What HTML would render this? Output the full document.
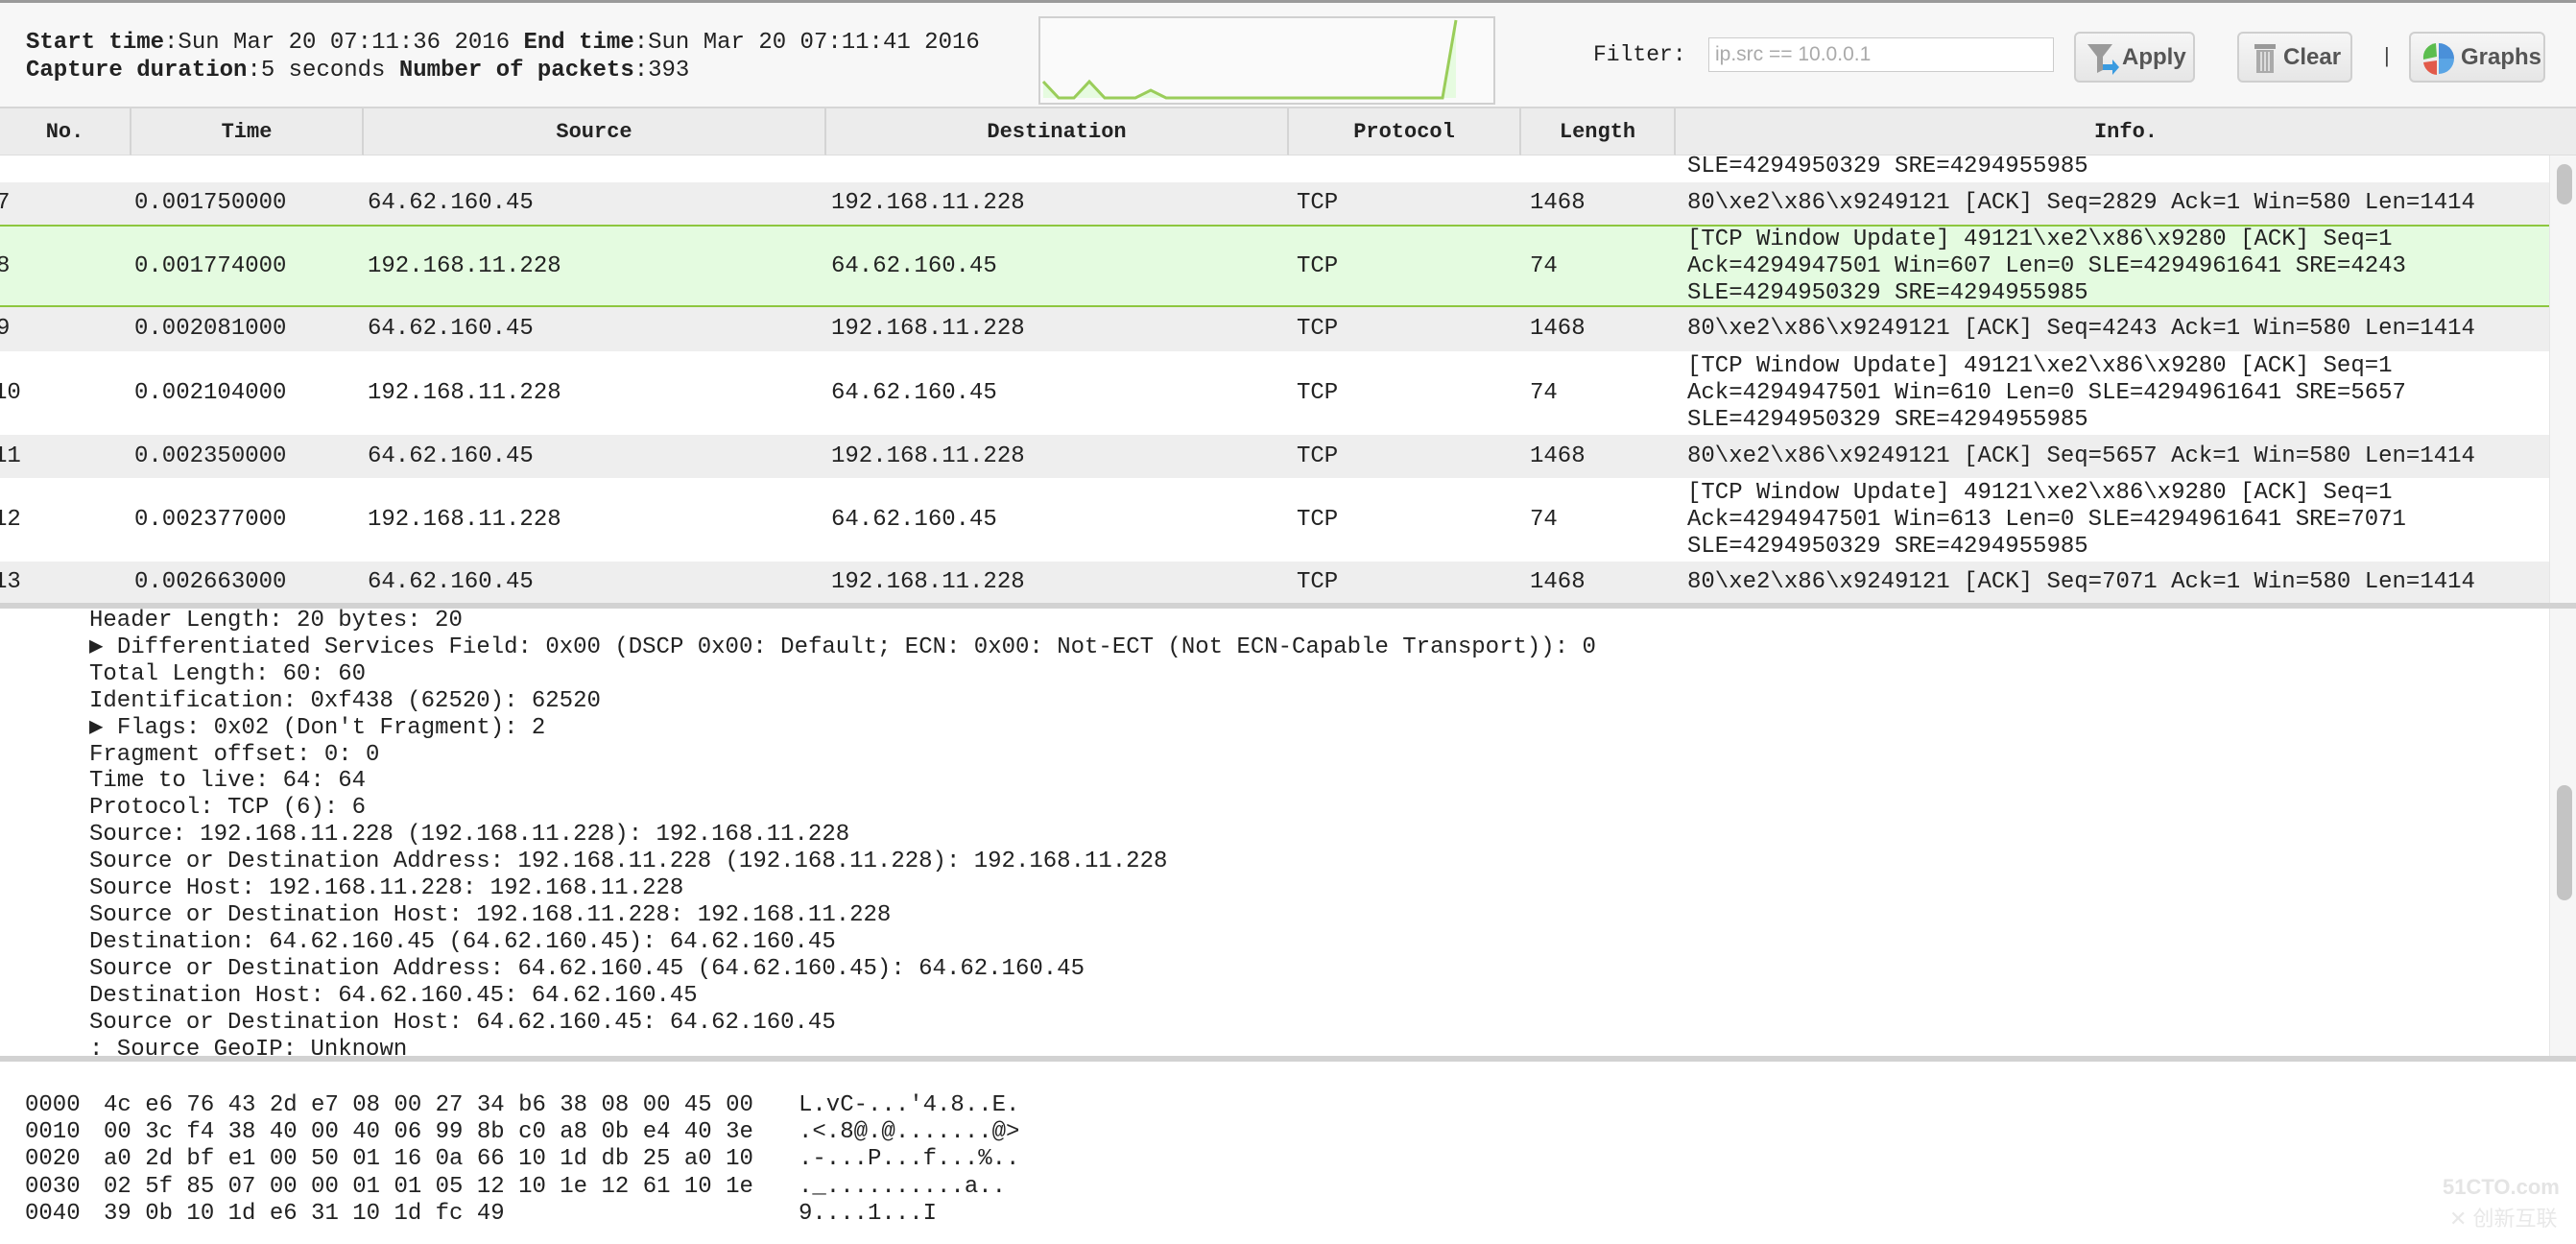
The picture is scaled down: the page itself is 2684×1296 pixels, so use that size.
<!DOCTYPE html>
<html><head><meta charset="utf-8"><style>
*{margin:0;padding:0;box-sizing:border-box}
body{width:2684px;height:1296px;overflow:hidden;background:#fff;font-family:"Liberation Mono",monospace;color:#222;position:relative}
.a{position:absolute;white-space:pre}
#top{position:absolute;left:0;top:0;width:2684px;height:113px;background:#f7f7f7;border-top:3px solid #9a9a9a;border-bottom:2px solid #d6d6d6}
.hd{position:absolute;top:113px;height:49px;background:#ececec;border-right:2px solid #d4d4d4;border-bottom:1px solid #ddd;font-weight:bold;font-size:22px;line-height:49px;text-align:center}
.row{position:absolute;left:0;width:2656px;font-size:24px}
.g{background:#eeeeee}
.sel{background:#e4fbe0;border-top:2px solid #8dc63f;border-bottom:2px solid #8dc63f}
.c{position:absolute;white-space:pre}
.btn{position:absolute;top:33px;height:53px;border:2px solid #cfcfcf;border-radius:6px;background:linear-gradient(#f6f6f6,#e6e6e6);font-family:"Liberation Sans",sans-serif;font-weight:bold;font-size:24px;color:#555;line-height:49px}
.det{font-size:24px}
</style></head><body>
<div id="top"></div>
<div class="a" style="left:27px;top:30px;font-size:24px;line-height:29px"><b>Start time</b>:Sun Mar 20 07:11:36 2016 <b>End time</b>:Sun Mar 20 07:11:41 2016
<b>Capture duration</b>:5 seconds <b>Number of packets</b>:393</div>
<svg class="a" style="left:1082px;top:17px" width="476" height="92">
<rect x="1" y="1" width="474" height="90" fill="#fafafa" stroke="#d0d0d0" stroke-width="2"/>
<polygon points="5,68 21,85 37,85 53,68 69,85 101,85 117,77 133,85 421,85 435,4 435,85 5,85" fill="#e6fbe0"/>
<polyline points="5,68 21,85 37,85 53,68 69,85 101,85 117,77 133,85 421,85 435,4" fill="none" stroke="#9acd5a" stroke-width="3"/>
</svg>
<div class="a" style="left:1660px;top:44px;font-size:23px">Filter:</div>
<div class="a" style="left:1780px;top:39px;width:360px;height:36px;background:#fff;border:1px solid #ccc;font-family:'Liberation Sans',sans-serif;font-size:21px;color:#aaa;line-height:34px;padding-left:6px">ip.src == 10.0.0.1</div>
<div class="btn" style="left:2161px;width:126px">
<svg class="a" style="left:10px;top:8px" width="36" height="36"><path d="M2 3h26l-10 13v14l-6 3V16z" fill="#9a9a9a"/><path d="M18 24h10v-5l7 8-7 8v-5H18z" fill="#3a9be0"/></svg><span class="a" style="left:48px">Apply</span></div>
<div class="btn" style="left:2331px;width:120px">
<svg class="a" style="left:14px;top:9px" width="26" height="34"><rect x="2" y="2" width="22" height="5" fill="#999"/><rect x="4" y="8" width="18" height="24" fill="#aaa"/><path d="M9 10v20M13 10v20M17 10v20" stroke="#ddd" stroke-width="2"/></svg><span class="a" style="left:46px">Clear</span></div>
<div class="a" style="left:2484px;top:45px;font-family:'Liberation Sans',sans-serif;font-size:22px;color:#444">|</div>
<div class="btn" style="left:2510px;width:142px">
<svg class="a" style="left:10px;top:7px" width="38" height="38"><path d="M19 19L19 3A16 16 0 0 1 35 19z" fill="#4a90d9"/><path d="M19 19L35 19A16 16 0 0 1 19 35z" fill="#5aa5e5"/><path d="M17 21L17 36A15 15 0 0 1 3 23z" fill="#e25a4a"/><path d="M17 17L3 20A15 15 0 0 1 16 3z" fill="#5bbd4e"/></svg><span class="a" style="left:52px">Graphs</span></div>

<div class="hd" style="left:0;width:137px">No.</div>
<div class="hd" style="left:137px;width:242px">Time</div>
<div class="hd" style="left:379px;width:482px">Source</div>
<div class="hd" style="left:861px;width:482px">Destination</div>
<div class="hd" style="left:1343px;width:242px">Protocol</div>
<div class="hd" style="left:1585px;width:161px">Length</div>
<div class="hd" style="left:1746px;width:938px;border-right:0">Info.</div>

<div class="row" style="top:162px;height:28px"><span class="c" style="left:1758px;top:-2px;line-height:28px">SLE=4294950329 SRE=4294955985</span></div>

<div class="row g" style="top:190px;height:44px;line-height:44px"><span class="c" style="left:-4px">7</span><span class="c" style="left:140px">0.001750000</span><span class="c" style="left:383px">64.62.160.45</span><span class="c" style="left:866px">192.168.11.228</span><span class="c" style="left:1351px">TCP</span><span class="c" style="left:1594px">1468</span><span class="c" style="left:1758px">80\xe2\x86\x9249121 [ACK] Seq=2829 Ack=1 Win=580 Len=1414</span></div>

<div class="row sel" style="top:234px;height:86px;line-height:84px"><span class="c" style="left:-4px">8</span><span class="c" style="left:140px">0.001774000</span><span class="c" style="left:383px">192.168.11.228</span><span class="c" style="left:866px">64.62.160.45</span><span class="c" style="left:1351px">TCP</span><span class="c" style="left:1594px">74</span><span class="c" style="left:1758px;top:0;line-height:28px">[TCP Window Update] 49121\xe2\x86\x9280 [ACK] Seq=1
Ack=4294947501 Win=607 Len=0 SLE=4294961641 SRE=4243
SLE=4294950329 SRE=4294955985</span></div>

<div class="row g" style="top:320px;height:46px;line-height:46px"><span class="c" style="left:-4px">9</span><span class="c" style="left:140px">0.002081000</span><span class="c" style="left:383px">64.62.160.45</span><span class="c" style="left:866px">192.168.11.228</span><span class="c" style="left:1351px">TCP</span><span class="c" style="left:1594px">1468</span><span class="c" style="left:1758px">80\xe2\x86\x9249121 [ACK] Seq=4243 Ack=1 Win=580 Len=1414</span></div>

<div class="row" style="top:366px;height:87px;line-height:87px"><span class="c" style="left:-7px">10</span><span class="c" style="left:140px">0.002104000</span><span class="c" style="left:383px">192.168.11.228</span><span class="c" style="left:866px">64.62.160.45</span><span class="c" style="left:1351px">TCP</span><span class="c" style="left:1594px">74</span><span class="c" style="left:1758px;top:2px;line-height:28px">[TCP Window Update] 49121\xe2\x86\x9280 [ACK] Seq=1
Ack=4294947501 Win=610 Len=0 SLE=4294961641 SRE=5657
SLE=4294950329 SRE=4294955985</span></div>

<div class="row g" style="top:453px;height:45px;line-height:45px"><span class="c" style="left:-7px">11</span><span class="c" style="left:140px">0.002350000</span><span class="c" style="left:383px">64.62.160.45</span><span class="c" style="left:866px">192.168.11.228</span><span class="c" style="left:1351px">TCP</span><span class="c" style="left:1594px">1468</span><span class="c" style="left:1758px">80\xe2\x86\x9249121 [ACK] Seq=5657 Ack=1 Win=580 Len=1414</span></div>

<div class="row" style="top:498px;height:87px;line-height:87px"><span class="c" style="left:-7px">12</span><span class="c" style="left:140px">0.002377000</span><span class="c" style="left:383px">192.168.11.228</span><span class="c" style="left:866px">64.62.160.45</span><span class="c" style="left:1351px">TCP</span><span class="c" style="left:1594px">74</span><span class="c" style="left:1758px;top:2px;line-height:28px">[TCP Window Update] 49121\xe2\x86\x9280 [ACK] Seq=1
Ack=4294947501 Win=613 Len=0 SLE=4294961641 SRE=7071
SLE=4294950329 SRE=4294955985</span></div>

<div class="row g" style="top:585px;height:44px;line-height:44px"><span class="c" style="left:-7px">13</span><span class="c" style="left:140px">0.002663000</span><span class="c" style="left:383px">64.62.160.45</span><span class="c" style="left:866px">192.168.11.228</span><span class="c" style="left:1351px">TCP</span><span class="c" style="left:1594px">1468</span><span class="c" style="left:1758px">80\xe2\x86\x9249121 [ACK] Seq=7071 Ack=1 Win=580 Len=1414</span></div>

<div class="a" style="left:2656px;top:162px;width:28px;height:467px;background:#f6f6f6;border-left:1px solid #e6e6e6"></div>
<div class="a" style="left:2664px;top:171px;width:16px;height:42px;background:#c4c4c4;border-radius:8px"></div>

<div class="a" style="left:0;top:628px;width:2684px;height:6px;background:#d2d2d2"></div>
<div class="a det" style="left:93px;top:633px;line-height:27.9px">Header Length: 20 bytes: 20
▶ Differentiated Services Field: 0x00 (DSCP 0x00: Default; ECN: 0x00: Not-ECT (Not ECN-Capable Transport)): 0
Total Length: 60: 60
Identification: 0xf438 (62520): 62520
▶ Flags: 0x02 (Don't Fragment): 2
Fragment offset: 0: 0
Time to live: 64: 64
Protocol: TCP (6): 6
Source: 192.168.11.228 (192.168.11.228): 192.168.11.228
Source or Destination Address: 192.168.11.228 (192.168.11.228): 192.168.11.228
Source Host: 192.168.11.228: 192.168.11.228
Source or Destination Host: 192.168.11.228: 192.168.11.228
Destination: 64.62.160.45 (64.62.160.45): 64.62.160.45
Source or Destination Address: 64.62.160.45 (64.62.160.45): 64.62.160.45
Destination Host: 64.62.160.45: 64.62.160.45
Source or Destination Host: 64.62.160.45: 64.62.160.45
: Source GeoIP: Unknown</div>
<div class="a" style="left:2656px;top:634px;width:28px;height:466px;background:#f6f6f6;border-left:1px solid #e6e6e6"></div>
<div class="a" style="left:2664px;top:818px;width:16px;height:120px;background:#c4c4c4;border-radius:8px"></div>
<div class="a" style="left:0;top:1100px;width:2684px;height:6px;background:#d2d2d2"></div>

<div class="a" style="left:26px;top:1138px;font-size:24px;line-height:28.2px">0000
0010
0020
0030
0040</div>
<div class="a" style="left:108px;top:1138px;font-size:24px;line-height:28.2px">4c e6 76 43 2d e7 08 00 27 34 b6 38 08 00 45 00
00 3c f4 38 40 00 40 06 99 8b c0 a8 0b e4 40 3e
a0 2d bf e1 00 50 01 16 0a 66 10 1d db 25 a0 10
02 5f 85 07 00 00 01 01 05 12 10 1e 12 61 10 1e
39 0b 10 1d e6 31 10 1d fc 49</div>
<div class="a" style="left:832px;top:1138px;font-size:24px;line-height:28.2px">L.vC-...'4.8..E.
.&lt;.8@.@.......@&gt;
.-...P...f...%..
._..........a..
9....1...I</div>
<div class="a" style="left:2545px;top:1224px;font-family:'Liberation Sans',sans-serif;font-size:22px;color:#e4e4e4;font-weight:bold">51CTO.com</div>
<div class="a" style="left:2552px;top:1252px;font-family:'Liberation Sans','Noto Sans CJK SC',sans-serif;font-size:22px;color:#e8e8e8">✕ 创新互联</div>
</body></html>
